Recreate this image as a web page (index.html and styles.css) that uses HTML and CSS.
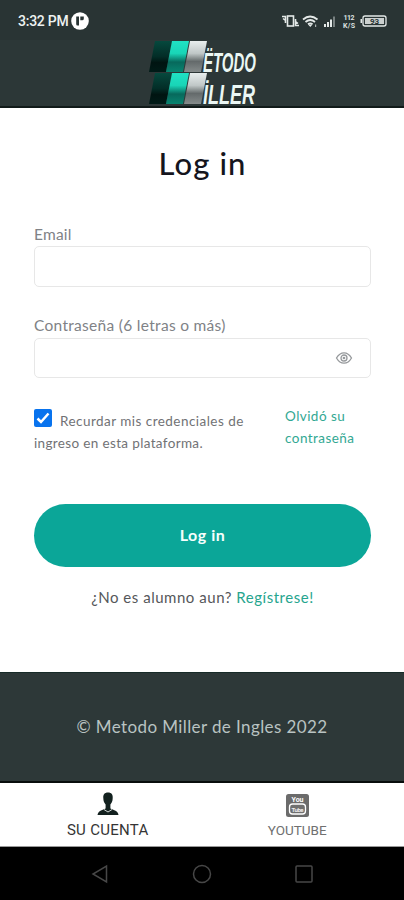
FILE: index.html
```html
<!DOCTYPE html>
<html lang="es">
<head>
<meta charset="utf-8">
<meta name="viewport" content="width=device-width, initial-scale=1">
<title>Metodo Miller</title>
<link rel="stylesheet" href="styles.css">
</head>
<body>
<div class="status">
  <span class="clock">3:32 PM</span>
  <svg class="app-dot" width="18" height="18" viewBox="0 0 18 18"><circle cx="9" cy="9" r="8.8" fill="#fff"/><path d="M5.2 4.5H8v9H6.4Q5.2 13.500 5.200 12zM9.300 4.500h3.500v2.200q0 1.600-1.600 1.600H9.300z" fill="#293434"/></svg>
  <svg class="indicators" width="110" height="18" viewBox="0 0 110 18">
    <g fill="none" stroke="#e4e9e8" stroke-width="1.600"><rect x="7.500" y="4" width="6" height="10"/><path d="M2 4.500h3.500v6.500M19 13.500h-3.500v-6.500M3 6.500l2.500 2M18 11.500l-2.500-2"/>
    <path d="M23 7.500q7-6 14.500 0M25.500 10q4.700-4 9.500 0M28 12.300q2.300-1.800 4.500 0" stroke-width="1.800"/></g>
    <path d="M28 12.500h4.500L30.300 15zM44 12h2v3h-2zM47 10h2v5h-2zM50 7.500h2V15h-2z" fill="#e4e9e8"/><path d="M53 4.500h2V15h-2z" fill="#778080"/><path d="M35 12.500h1.200V15H35z" fill="#aab1b0"/>
    <text x="63.500" y="8" class="rate" textLength="11">112</text><text x="63" y="16" class="rate" textLength="12">K/S</text>
    <rect x="83" y="4" width="23" height="10" rx="2" fill="none" stroke="#e4e9e8" stroke-width="1.300"/><rect x="85" y="6" width="19" height="6" fill="#cbd0cf"/><path d="M80.500 7h1.500v4h-1.500z" fill="#e4e9e8"/><text x="90" y="12" class="charge">93</text>
  </svg>
</div>
<header class="header">
  <svg width="110" height="66" viewBox="0 0 110 66" role="img" aria-label="Metodo Miller">
    <defs>
      <linearGradient id="dark" x2="0" y2="1"><stop stop-color="#06493e"/><stop offset=".5" stop-color="#032d27"/><stop offset=".7" stop-color="#001411"/><stop offset="1" stop-color="#001b17"/></linearGradient>
      <linearGradient id="mint" x2="0" y2="1"><stop stop-color="#20e2c4"/><stop offset=".4" stop-color="#19d5b7"/><stop offset=".68" stop-color="#07695c"/><stop offset="1" stop-color="#088470"/></linearGradient>
      <linearGradient id="silver" x2="0" y2="1"><stop stop-color="#e8eeee"/><stop offset=".4" stop-color="#c0c7c7"/><stop offset=".66" stop-color="#646a6b"/><stop offset="1" stop-color="#858b8b"/></linearGradient>
      <g id="bars"><path d="M6 0H23L17 31H0z" fill="url(#dark)"/><path d="M23 0H40L34 31H17z" fill="url(#mint)"/><path d="M41 0H58L52 31H35z" fill="url(#silver)"/></g>
    </defs>
    <use href="#bars" y="1"/><use href="#bars" y="33"/>
    <text x="54" y="31.500" class="brand" textLength="53" lengthAdjust="spacingAndGlyphs">ËTODO</text>
    <text x="54" y="63.800" class="brand" textLength="52" lengthAdjust="spacingAndGlyphs">İLLER</text>
  </svg>
</header>
<main class="main">
  <h1 class="title">Log in</h1>
  <form class="form">
    <label class="label email-label">Email</label>
    <div class="field"></div>
    <label class="label password-label">Contraseña (6 letras o más)</label>
    <div class="field">
      <svg width="18" height="14" viewBox="0 0 18 14" fill="none" stroke="#96999c" stroke-width="1.300"><path d="M1.500 7Q4.500 1.800 9 1.800T16.500 7Q13.500 12.200 9 12.200T1.500 7z"/><circle cx="9" cy="7" r="3"/><circle cx="9" cy="7" r=".7"/></svg>
    </div>
    <div class="options">
      <div class="remember"><span class="check"><svg width="18" height="18" viewBox="0 0 18 18"><rect width="18" height="18" rx="2" fill="#0873ee"/><path d="M3.500 9.500l3.500 3.500 7.500-8.500" fill="none" stroke="#fff" stroke-width="2.500"/></svg></span><span>Recurdar mis credenciales de</span><br><span class="remember-two">ingreso en esta plataforma.</span></div>
      <a class="forgot">Olvidó su<br>contraseña</a>
    </div>
    <div class="submit">Log in</div>
  </form>
  <p class="signup">¿No es alumno aun? <a>Regístrese!</a></p>
</main>
<footer class="footer">© Metodo Miller de Ingles 2022</footer>
<nav class="tabs">
  <div class="tab account">
    <svg width="22" height="24" viewBox="0 0 22 24" fill="#13211f"><path d="M11 .5C7.500.500 6 2.700 6.300 6c0 3.500 1.100 5 2.300 6.500v4L4 18.500Q1 19.500.500 23h21q-.500-3.500-3.500-4.500l-4.600-2v-4C14.600 11 15.700 9.500 15.700 6 16 2.700 14.500.500 11 .500z"/><path d="M7 17.500l4 2.500 4-2.500" stroke="#d1d7d5" fill="none"/></svg>
    <span>SU CUENTA</span>
  </div>
  <div class="tab youtube">
    <svg width="23" height="23" viewBox="0 0 23 23"><rect width="23" height="23" rx="2.500" fill="#6b6b6b"/><text x="5.500" y="8" class="you" textLength="12">You</text><rect x="3.500" y="10" width="16" height="10" rx="3" fill="#707070" stroke="#fff" stroke-width="1.300"/><text x="5.500" y="17.500" class="tube" textLength="12">Tube</text></svg>
    <span>YOUTUBE</span>
  </div>
</nav>
<div class="system">
  <svg width="18" height="20" viewBox="0 0 18 20"><path d="M15.500 2v16L2 10z"/></svg>
  <svg width="20" height="20" viewBox="0 0 20 20"><circle cx="10" cy="10" r="8.500"/></svg>
  <svg width="18" height="20" viewBox="0 0 18 20"><rect x="1" y="2" width="16" height="16" rx="1"/></svg>
</div>
</body>
</html>
```
FILE: styles.css
```css
* { box-sizing: border-box; }
body { margin: 0; width: 404px; height: 900px; background: #fff; font-family: Lato, sans-serif; overflow: hidden; }
.status { height: 40px; background: #293434; display: flex; align-items: center; padding: 2px 14px 0 18px; color: #eef2f1; }
.clock { font: 500 14px/18px Roboto, sans-serif; width: 50px; white-space: nowrap; letter-spacing: -.25px; }
.app-dot { margin-left: 3px; }
.indicators { margin-left: auto; }
.rate { font: 700 7px Roboto, sans-serif; fill: #dce1e0; }
.charge { font: 700 8px Roboto, sans-serif; fill: #293434; }
.header { height: 68px; background: #2c3737; border-bottom: 2px solid #111a19; display: flex; padding-left: 149px; }
.header svg { overflow: visible; }
.brand { font: italic 700 28px "Liberation Sans", sans-serif; fill: #ebf7f4; }
.main { height: 564px; padding: 33px 33px 0 34px; display: flex; flex-direction: column; }
.title { margin: 0; height: 44px; font-size: 31px; line-height: 44px; font-weight: 500; color: #15151d; text-align: center; letter-spacing: 1.1px; }
.form { display: flex; flex-direction: column; padding-top: 38px; }
.label { height: 23px; line-height: 22px; font-size: 15.500px; color: #808286; white-space: nowrap; }
.email-label { letter-spacing: .2px; }
.password-label { margin-top: 28px; height: 23px; line-height: 20px; letter-spacing: .3px; }
.field { height: 41px; border: 1.500px solid #e7e7e7; border-radius: 5px; display: flex; align-items: center; justify-content: flex-end; padding-right: 17px; }
.password-label + .field { height: 40px; }
.options { margin-top: 27px; display: flex; height: 50px; }
.remember { width: 251px; font-size: 13.500px; line-height: 22px; color: #717275; padding-top: 4px; white-space: nowrap; letter-spacing: .46px; }
.remember-two { letter-spacing: .35px; }
.check { display: inline-block; width: 26px; height: 18px; vertical-align: -1px; }
.check svg { display: block; }
.forgot { font-size: 13.500px; line-height: 22px; color: #32a893; white-space: nowrap; letter-spacing: .45px; }
.submit { margin-top: 49px; height: 63px; border-radius: 32px; background: #0ba698; color: #f6fffd; font-weight: 700; font-size: 16px; letter-spacing: .55px; display: flex; align-items: center; justify-content: center; padding-bottom: 3px; }
.signup { margin: 19px 0 0; text-align: center; font-size: 15px; line-height: 22px; color: #55575a; white-space: nowrap; letter-spacing: .53px; }
.signup a { color: #26a58e; }
.footer { height: 111px; background: #2d3838; border-top: 1px solid #172b28; border-bottom: 2px solid #080d0c; color: #b9c3c2; font-size: 17px; letter-spacing: .4px; padding-bottom: 2px; display: flex; align-items: center; justify-content: center; white-space: nowrap; }
.tabs { height: 64px; display: flex; padding: 0 12px 0 13px; border-bottom: 1px solid #999; font-family: Roboto, sans-serif; }
.tab { flex: 1; display: flex; flex-direction: column; align-items: center; }
.account { padding-top: 9px; font-size: 15px; letter-spacing: .3px; line-height: 20px; color: #353535; }
.account span { margin-top: 4px; }
.youtube { padding-top: 11px; font-size: 13.500px; line-height: 20px; color: #707070; }
.youtube span { margin-top: 3px; }
.you { font: 700 7px Roboto, sans-serif; fill: #fff; }
.tube { font: 700 6px Roboto, sans-serif; fill: #eee; }
.system { height: 53px; background: #000; display: flex; justify-content: space-between; align-items: center; padding: 0 91px; }
.system svg { fill: none; stroke: #474747; stroke-width: 1.500; }
```
